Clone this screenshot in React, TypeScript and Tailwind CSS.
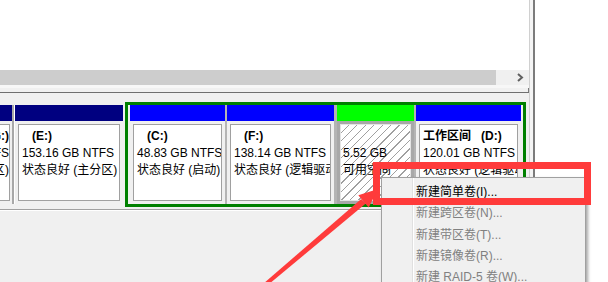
import React from 'react';

interface PartitionProps {
  widthClass: string;
  barClass: string;
  label?: string;
  letter?: string;
  size: string;
  status: string;
}

const Partition = ({ widthClass, barClass, label, letter, size, status }: PartitionProps) => (
  <div className={`flex h-[99px] shrink-0 flex-col ${widthClass}`}>
    <div className={`h-[16px] ${barClass}`} />
    <div className="flex-1 bg-[#f0f0f0] p-[3px]">
      <div className="h-full overflow-hidden whitespace-nowrap border border-[#a0a0a0] bg-white pl-[3px] pt-[3px] leading-[17px]">
        <div className="h-[17px] font-bold">
          {label}
          {letter && <span className="ml-[10px]">{letter}</span>}
        </div>
        <div>{size}</div>
        <div>{status}</div>
      </div>
    </div>
  </div>
);

const FreeSpace = () => (
  <div className="flex h-[99px] w-[77px] shrink-0 flex-col">
    <div className="h-[16px] bg-[#00ff00]" />
    <div className="flex-1 bg-[#a8a8a8] p-[3px]">
      <div className="h-full overflow-hidden whitespace-nowrap border border-[#e4e4e4] bg-[repeating-linear-gradient(135deg,#ffffff_0px,#ffffff_5px,#a0a0a0_5px,#a0a0a0_6px)] pl-[2px] pt-[3px] leading-[17px]">
        <div className="h-[17px]" />
        <div>5.52 GB</div>
        <div>可用空间</div>
      </div>
    </div>
  </div>
);

const Separator = () => <div className="h-[99px] w-[2px] shrink-0 bg-[#b4b4b4]" />;

const menuItems = [
  { text: '新建简单卷(I)...', enabled: true },
  { text: '新建跨区卷(N)...', enabled: false },
  { text: '新建带区卷(T)...', enabled: false },
  { text: '新建镜像卷(R)...', enabled: false },
  { text: '新建 RAID-5 卷(W)...', enabled: false },
];

export default function App() {
  return (
    <div className="relative flex h-[282px] w-[608px] overflow-hidden bg-white font-['Liberation_Sans','Noto_Sans_CJK_SC',sans-serif] text-[12px] text-black">
      {/* left pane: volume list + disk graph */}
      <div className="flex w-[529px] shrink-0 flex-col">
        <div className="h-[70px] bg-white" />

        {/* horizontal scrollbar */}
        <div className="flex h-[15px] bg-[#f0f0f0]">
          <div className="w-[496px] bg-[#cdcdcd]" />
          <div className="flex flex-1 items-center justify-end pr-[5px]">
            <svg width="7" height="9" viewBox="0 0 7 9">
              <path d="M1 1 L5 4.5 L1 8" fill="none" stroke="#606060" strokeWidth="2" />
            </svg>
          </div>
        </div>

        {/* splitter */}
        <div className="h-[3px] bg-[#f7f7f7]" />
        <div className="h-[4px] border-r border-[#7a7a7a] bg-[#f0f0f0]" />
        <div className="h-[1px] bg-[#6f6f6f]" />
        <div className="h-[9px] bg-[#f0f0f0]" />

        {/* disk row */}
        <div className="flex h-[105px] items-start bg-[#f0f0f0]">
          {/* partially visible partition */}
          <div className="mt-[3px] flex h-[99px] w-[12px] shrink-0 flex-col">
            <div className="h-[16px] bg-[#000080]" />
            <div className="flex-1 bg-[#f0f0f0] py-[3px] pr-[2px]">
              <div className="flex h-full flex-col items-end overflow-hidden whitespace-nowrap border border-l-0 border-[#a0a0a0] bg-white pt-[3px] leading-[17px]">
                <div className="shrink-0 font-bold">(G:)</div>
                <div className="shrink-0">NTFS</div>
                <div className="shrink-0">分区)</div>
              </div>
            </div>
          </div>
          <div className="mt-[3px] h-[99px] w-[2px] shrink-0 bg-[#a8a8a8]" />
          <div className="mt-[3px] h-[99px] w-[1px] shrink-0 bg-white" />
          <div className="mt-[3px]">
            <Partition widthClass="w-[108px]" barClass="bg-[#000080]" letter="(E:)" size="153.16 GB NTFS" status="状态良好 (主分区)" />
          </div>

          {/* extended partition outlined in green */}
          <div className="ml-[2px] flex h-[105px] shrink-0 border-[3px] border-[#008000] px-[2px]">
            <Partition widthClass="w-[95px]" barClass="bg-[#0000ff]" letter="(C:)" size="48.83 GB NTFS" status="状态良好 (启动)" />
            <Separator />
            <Partition widthClass="w-[107px]" barClass="bg-[#0000ff]" letter="(F:)" size="138.14 GB NTFS" status="状态良好 (逻辑驱动器)" />
            <div className="h-[99px] w-[3px] shrink-0 bg-[#b4b4b4]" />
            <FreeSpace />
            <Separator />
            <Partition widthClass="w-[105px]" barClass="bg-[#0000ff]" label="工作区间" letter="(D:)" size="120.01 GB NTFS" status="状态良好 (逻辑驱动器)" />
          </div>
        </div>

        {/* area below the disk graph */}
        <div className="h-[2px] bg-[#f0f0f0]" />
        <div className="h-[1px] bg-[#a0a0a0]" />
        <div className="h-[1px] bg-white" />
        <div className="flex-1 bg-[#f0f0f0]" />
      </div>

      {/* vertical splitter */}
      <div className="w-[1px] shrink-0 bg-[#d0d0d0]" />
      <div className="w-[3px] shrink-0 bg-[#f4f4f4]" />
      <div className="w-[2px] shrink-0 bg-[#7c7c7c]" />
      <div className="flex-1 bg-white" />

      {/* context menu */}
      <div className="absolute left-[381px] top-[177px] flex h-[112px] w-[205px] border border-[#a0a0a0] bg-[#f0f0f0] shadow-[2px_2px_3px_rgba(0,0,0,0.35)]">
        <div className="w-[30px] shrink-0" />
        <div className="w-[1px] shrink-0 bg-[#e0e0e0]" />
        <div className="w-[1px] shrink-0 bg-white" />
        <div className="flex flex-col pl-[2px] pt-[3px]">
          {menuItems.map((item) => (
            <div
              key={item.text}
              className={`flex h-[22px] items-center whitespace-nowrap ${item.enabled ? 'text-black' : 'text-[#808080]'}`}
            >
              {item.text}
            </div>
          ))}
        </div>
      </div>

      {/* red highlight box */}
      <div className="absolute left-[373px] top-[162px] h-[43px] w-[218px] border-[7px] border-[#ff3b3b]" />

      {/* red arrow */}
      <svg className="pointer-events-none absolute left-0 top-0" width="608" height="282" viewBox="0 0 608 282">
        <polygon points="267.3,285.5 264.7,282.5 361.2,199 365.8,203.6" fill="#ff3b3b" />
        <polygon points="378,189 368.7,207.4 358.3,195.2" fill="#ff3b3b" />
      </svg>
    </div>
  );
}
